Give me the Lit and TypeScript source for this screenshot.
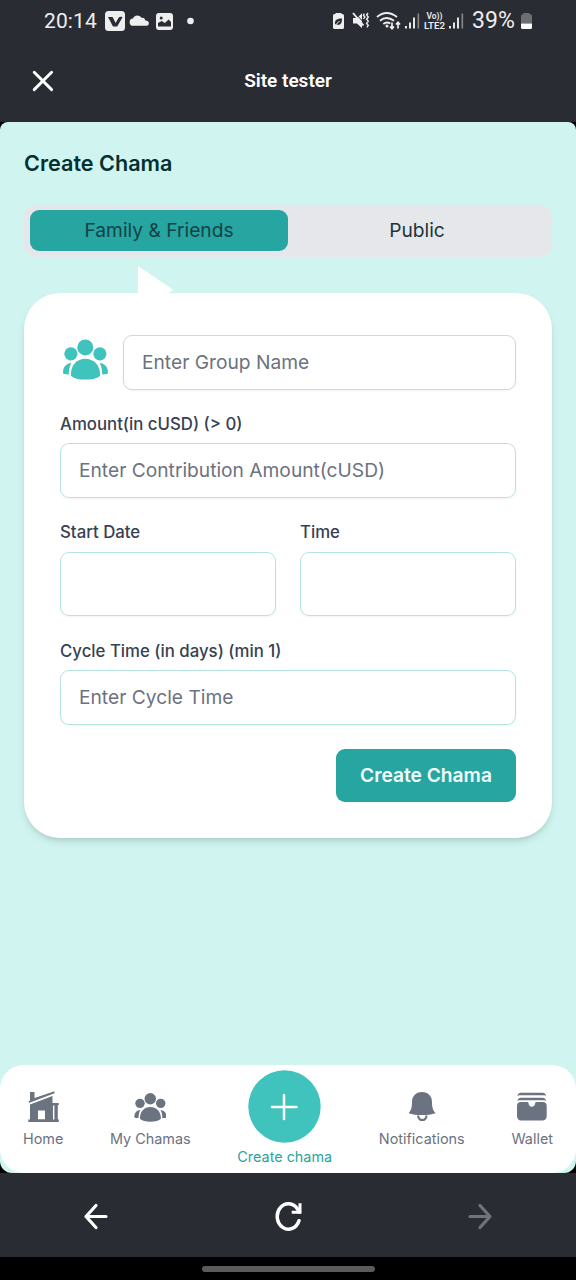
import { LitElement, html, css, svg } from "lit";
import { customElement } from "lit/decorators.js";

const people = svg`
  <circle cx="22.3" cy="8.4" r="8"/>
  <circle cx="7.900" cy="14.800" r="6.600"/>
  <circle cx="36.900" cy="14.800" r="6.600"/>
  <path d="M7.800 36.400c0-10.400 6-16.600 14.500-16.600S37.200 26 37.200 36.400c-2.500 2.900-8.400 4.200-14.700 4.200S10.300 39.300 7.800 36.400Z"/>
  <path d="M.2 34.600c-.8-4.700 1.800-9.900 8.100-10.500-1.800 3.400-2.500 7.400-2.500 11.300-2.200.1-4.500 0-5.600-.8Z"/>
  <path d="M44.800 34.600c.8-4.700-1.800-9.900-8.100-10.500 1.800 3.400 2.500 7.400 2.500 11.300 2.200.1 4.500 0 5.600-.8Z"/>`;

const bars = (x: number) => svg`
  <path d="M${x + 1} 26v2.500M${x + 5} 22.500v6M${x + 9} 17.500v11" stroke="#eee" stroke-width="1.900"/>
  <path d="M${x + 13.300} 13.500v15" stroke="#85868a" stroke-width="1.700"/>`;

@customElement("app-root")
class AppRoot extends LitElement {
  static styles = css`
    :host { display: block; height: 1280px; background: #000; font-family: Inter, "Noto Sans", sans-serif; overflow: hidden; }
    * { box-sizing: border-box; }
    svg { display: block; flex: none; }
    .phone { display: flex; flex-direction: column; height: 1280px; width: 576px; }
    .status { height: 42px; background: #2a2c34; display: flex; color: #eee; font: 400 21px/42px Roboto, sans-serif; }
    .clock { width: 61px; margin-left: 44px; white-space: nowrap; letter-spacing: .1px; }
    .gap { flex: 1; }
    .pct { width: 48px; margin-left: 7px; font-size: 23px; letter-spacing: .1px; white-space: nowrap; }
    .batt { margin-right: 43px; }
    .lte { font: 600 9.500px Roboto, sans-serif; }
    .head { height: 80px; background: #2a2c34; display: grid; grid-template-columns: 86px 1fr 86px; align-items: center; color: #fff; }
    .head h1 { margin: 0; padding: 0 0 2px; text-align: center; font: 600 19px/24px Roboto, sans-serif; }
    .close { margin: 0 0 2px 32px; }
    .view { height: 1051px; background: #d0f5f1; border-radius: 8px 8px 12px 12px; overflow: hidden; display: flex; flex-direction: column; }
    .main { padding: 24px 24px 0; flex: 1; }
    .title { margin: 0; font-size: 21.600px; line-height: 34px; font-weight: 570; color: #06302f; }
    .tabs { margin-top: 25px; height: 52px; border-radius: 12px; background: #e5e7eb; padding: 5px 6px 6px; display: grid; grid-template-columns: 1fr 1fr; color: #1b3540; font-size: 19.200px; }
    .tab { display: flex; align-items: center; justify-content: center; border-radius: 9px; padding-bottom: 2px; }
    .tab.on { background: #26a5a1; color: #134347; }
    .pointer { display: block; margin: 9px 0 0 114px; }
    .card { height: 545px; border-radius: 36px; background: #fff; padding: 42px 36px 36px; box-shadow: 0 5px 8px -1px rgba(0,0,0,.1), 0 3px 5px -2px rgba(0,0,0,.1); color: #374151; }
    .name { display: flex; justify-content: space-between; }
    .name svg { margin: 4px 0 0 3px; }
    .name .box { width: 393px; }
    .box { height: 55px; border: 1px solid #b5e4e1; border-radius: 9px; display: flex; align-items: center; padding: 0 18px 2px; font-size: 19.200px; color: #6b7280; box-shadow: 0 1px 2px rgba(0,0,0,.05); white-space: nowrap; }
    .label { display: block; font-size: 16.800px; line-height: 24px; font-weight: 500; margin: 22px 0 7px; white-space: nowrap; }
    .pair { display: grid; grid-template-columns: 1fr 1fr; gap: 24px; }
    .pair .label { margin: 22px 0 8px; }
    .pair .box { height: 64px; }
    .pair + .label { margin: 23px 0 7px; }
    .send { display: flex; align-items: center; justify-content: center; width: 180px; height: 53px; margin: 24px 0 0 auto; padding-bottom: 2px; border-radius: 9px; background: #26a5a1; color: #f3ffff; font-weight: 600; font-size: 19.200px; white-space: nowrap; }
    .nav { height: 108px; background: #fff; border-radius: 24px; display: flex; justify-content: space-between; padding: 0 23px; color: #6b7280; font-size: 14.400px; line-height: 20px; white-space: nowrap; }
    .item { display: flex; flex-direction: column; align-items: center; padding-top: 26px; }
    .item span { margin-top: 6px; }
    .item.add { padding-top: 5px; color: #2ba39e; }
    .item.add span { margin-top: 4px; }
    .tools { height: 84px; background: #2a2c34; display: flex; align-items: center; justify-content: space-between; padding: 2px 82px 0 82px; }
    .home { flex: 1; display: flex; justify-content: center; padding-top: 9px; }
    .pill { width: 173px; height: 6px; border-radius: 3px; background: #5b5b5b; }
  `;

  render() {
    return html`<div class="phone">
      <div class="status">
        <div class="clock">20:14</div>
        <svg width="92" height="42" viewBox="105 0 92 42" fill="#eee">
          <rect x="105" y="11" width="20" height="20" rx="3.500"/>
          <path d="M108 17h4.600l3 6 3-5.200c.8-1.200 2.500-1.400 3.900-.6l-5.300 9.300h-4.200Z" fill="#2a2c34"/>
          <path d="M133.500 25.800a3.600 3.600 0 0 1-.5-7.200c.5-3 5.600-5 8.500-.8 2.500-.5 3.500 1 3.600 2.500 5.200.5 4.500 5.500 1.500 5.500Z"/>
          <rect x="156" y="13" width="17" height="17" rx="3"/>
          <path d="M158 26.500v-3.400l3.700-2 3.200 2 3.700-3.600 2.400 2.400v4.600Z" fill="#2a2c34"/>
          <circle cx="161.200" cy="18" r="1.500" fill="#2a2c34"/>
          <circle cx="190.500" cy="21" r="3.300"/>
        </svg>
        <div class="gap"></div>
        <svg width="132" height="42" viewBox="333 0 132 42" fill="#eee">
          <path d="M335.500 14v-1h6v1h1q1.500 0 1.500 1.500v12q0 1.500-1.500 1.500h-8q-1.500 0-1.500-1.500v-12q0-1.500 1.500-1.500Z"/>
          <path d="M335 24.500c-.5-4.500 2-6 7-6 .2 5-2 7.200-5.500 6" fill="#2a2c34"/>
          <path d="m335.500 25 4-4" stroke="#eee" stroke-width="1"/>
          <path d="M353 18h4l5-4.800v15L357 23.500h-4Z"/>
          <path d="m354.500 12.500 13 14" stroke="#2a2c34" stroke-width="1"/>
          <path d="m353 13 10.500 12.500" stroke="#eee" stroke-width="1.900"/>
          <path d="m364.300 13.500-.8 1.800 1.400 1.800-1.400 1.800M368 13l-1.400 2 1.700 2-1.700 2.200 1.700 2-1.700 2.200 1.700 2-1.400 2" fill="none" stroke="#eee" stroke-width="1.400"/>
          <path d="M377 17q9.500-8 20 0M380 20.800q6.500-5.500 14 0M383.300 24q3.500-2.700 7-.5" fill="none" stroke="#eee" stroke-width="2"/>
          <circle cx="387" cy="26" r="1.500"/>
          <path d="M392 22.500v6m-2-2 2 2.300 2-2.300m4 2v-6m-2 2 2-2.300 2 2.300" fill="none" stroke="#eee" stroke-width="1.700"/>
          ${bars(405)}
          <text class="lte" x="426.500" y="19" textLength="16" lengthAdjust="spacingAndGlyphs">Vo))</text>
          <text class="lte" x="424" y="29" textLength="21" lengthAdjust="spacingAndGlyphs">LTE2</text>
          ${bars(449)}
        </svg>
        <div class="pct">39%</div>
        <svg class="batt" width="13" height="42" viewBox="520 0 13 42">
          <path d="M523.500 14v-1h6v1q2.500 0 2.500 2v7.500h-11V16q0-2 2.500-2Z" fill="#6d6e73"/>
          <path d="M521 23.500h11v4q0 1.500-1.500 1.500h-8q-1.500 0-1.500-1.500Z" fill="#fff"/>
        </svg>
      </div>
      <div class="head">
        <svg class="close" width="22" height="22" viewBox="0 0 22 22" fill="none" stroke="#fff" stroke-width="2.900" stroke-linecap="round"><path d="m2.200 2.200 17.400 17.400m0-17.400L2.200 19.600"/></svg>
        <h1>Site tester</h1>
      </div>
      <div class="view">
        <div class="main">
          <h2 class="title">Create Chama</h2>
          <div class="tabs"><div class="tab on">Family &amp; Friends</div><div class="tab">Public</div></div>
          <svg class="pointer" width="37" height="27" viewBox="0 0 37 27"><path d="M0 0 35.500 24 30 27H0Z" fill="#fff"/></svg>
          <div class="card">
            <div class="name">
              <svg width="45" height="41" viewBox="0 0 45 41" fill="#41c3bd">${people}</svg>
              <div class="box">Enter Group Name</div>
            </div>
            <span class="label">Amount(in cUSD) (&gt; 0)</span>
            <div class="box">Enter Contribution Amount(cUSD)</div>
            <div class="pair">
              <div><span class="label">Start Date</span><div class="box"></div></div>
              <div><span class="label">Time</span><div class="box"></div></div>
            </div>
            <span class="label">Cycle Time (in days) (min 1)</span>
            <div class="box">Enter Cycle Time</div>
            <div class="send">Create Chama</div>
          </div>
        </div>
        <div class="nav">
          <div class="item">
            <svg width="32" height="32" viewBox="-1 0 32 32" fill="#6b7280">
              <path d="M2 9.800V1h4.500v6L26.500.3v1.900L.8 11.900v-1.700Z"/>
              <path d="M2 13.400 24.500 5v7h6.300v2h-1v14.500h1V31H.3v-2.500H2Z"/>
              <path d="M10 19.500h7v8.700h-7ZM25 14.500h1.400v14H25Z" fill="#fff"/>
            </svg><span>Home</span></div>
          <div class="item"><svg width="32" height="32" viewBox="-.5 -2.500 44.800 44.800" fill="#6b7280">${people}</svg><span>My Chamas</span></div>
          <div class="item add">
            <svg width="73" height="73" viewBox="0 0 73 73"><circle cx="36.500" cy="36.500" r="36.200" fill="#41c3bd"/><path d="M36 25v24M24 37h24.500" fill="none" stroke="#fff" stroke-width="2.500" stroke-linecap="round"/></svg>
            <span>Create chama</span></div>
          <div class="item">
            <svg width="32" height="32" viewBox="0 0 32 32" fill="#6b7280">
              <path d="M16 1C9.500 1 6 5.500 6 11c0 5.500-1 8.500-3.400 11.200 3.600 1.300 8.200 1.800 13.400 1.800s9.800-.5 13.600-1.800C27 19.500 26 16.500 26 11 26 5.500 22.500 1 16 1Z"/>
              <path d="M12 24.500c.4 3 2 4.600 4.300 4.600s3.900-1.600 4.300-4.600" fill="none" stroke="#6b7280" stroke-width="2"/>
            </svg><span>Notifications</span></div>
          <div class="item">
            <svg width="32" height="32" viewBox="0 0 32 32" fill="#6b7280">
              <path d="M1.500 5c0-2 1.400-3.300 3.400-3.300h21.600c2 0 3.600 1.300 3.600 3.300l-1.500-.8H3ZM1.500 10c0-2 1.400-3.300 3.400-3.300h21.600c2 0 3.600 1.300 3.600 3.300l-1.500-.8H3Z"/>
              <path d="M5 11h6.200c1 0 1.300.8 1.500 2 .5 3.500 5.600 3.500 6.300 0 .2-1.200.5-2 1.500-2h6.200c2.600 0 4 1.400 4 4v10c0 2.700-1.600 4.500-4.300 4.500H5.200C2.500 29.500 1 27.700 1 25V15c0-2.600 1.400-4 4-4Z"/>
            </svg><span>Wallet</span></div>
        </div>
      </div>
      <div class="tools">
        <svg width="28" height="28" viewBox="0 0 28 28" fill="none" stroke="#fff" stroke-width="3.200" stroke-linecap="round" stroke-linejoin="round"><path d="M24 14.500H4m10-11L4 14.500l10 11"/></svg>
        <svg width="30" height="32" viewBox="0 0 30 32" fill="none" stroke="#fff" stroke-width="3.500" stroke-linecap="round" stroke-linejoin="round"><path d="M26 20.700A11.200 12.700 0 1 1 24.500 9l2 3"/><path d="M27 3.200v9h-8.300" stroke-width="3" stroke-linecap="butt" stroke-linejoin="miter"/></svg>
        <svg width="28" height="28" viewBox="0 0 28 28" fill="none" stroke="#727379" stroke-width="3.200" stroke-linecap="round" stroke-linejoin="round"><path d="M4 14.500h20m-10-11 10 11-10 11"/></svg>
      </div>
      <div class="home"><div class="pill"></div></div>
    </div>`;
  }
}
